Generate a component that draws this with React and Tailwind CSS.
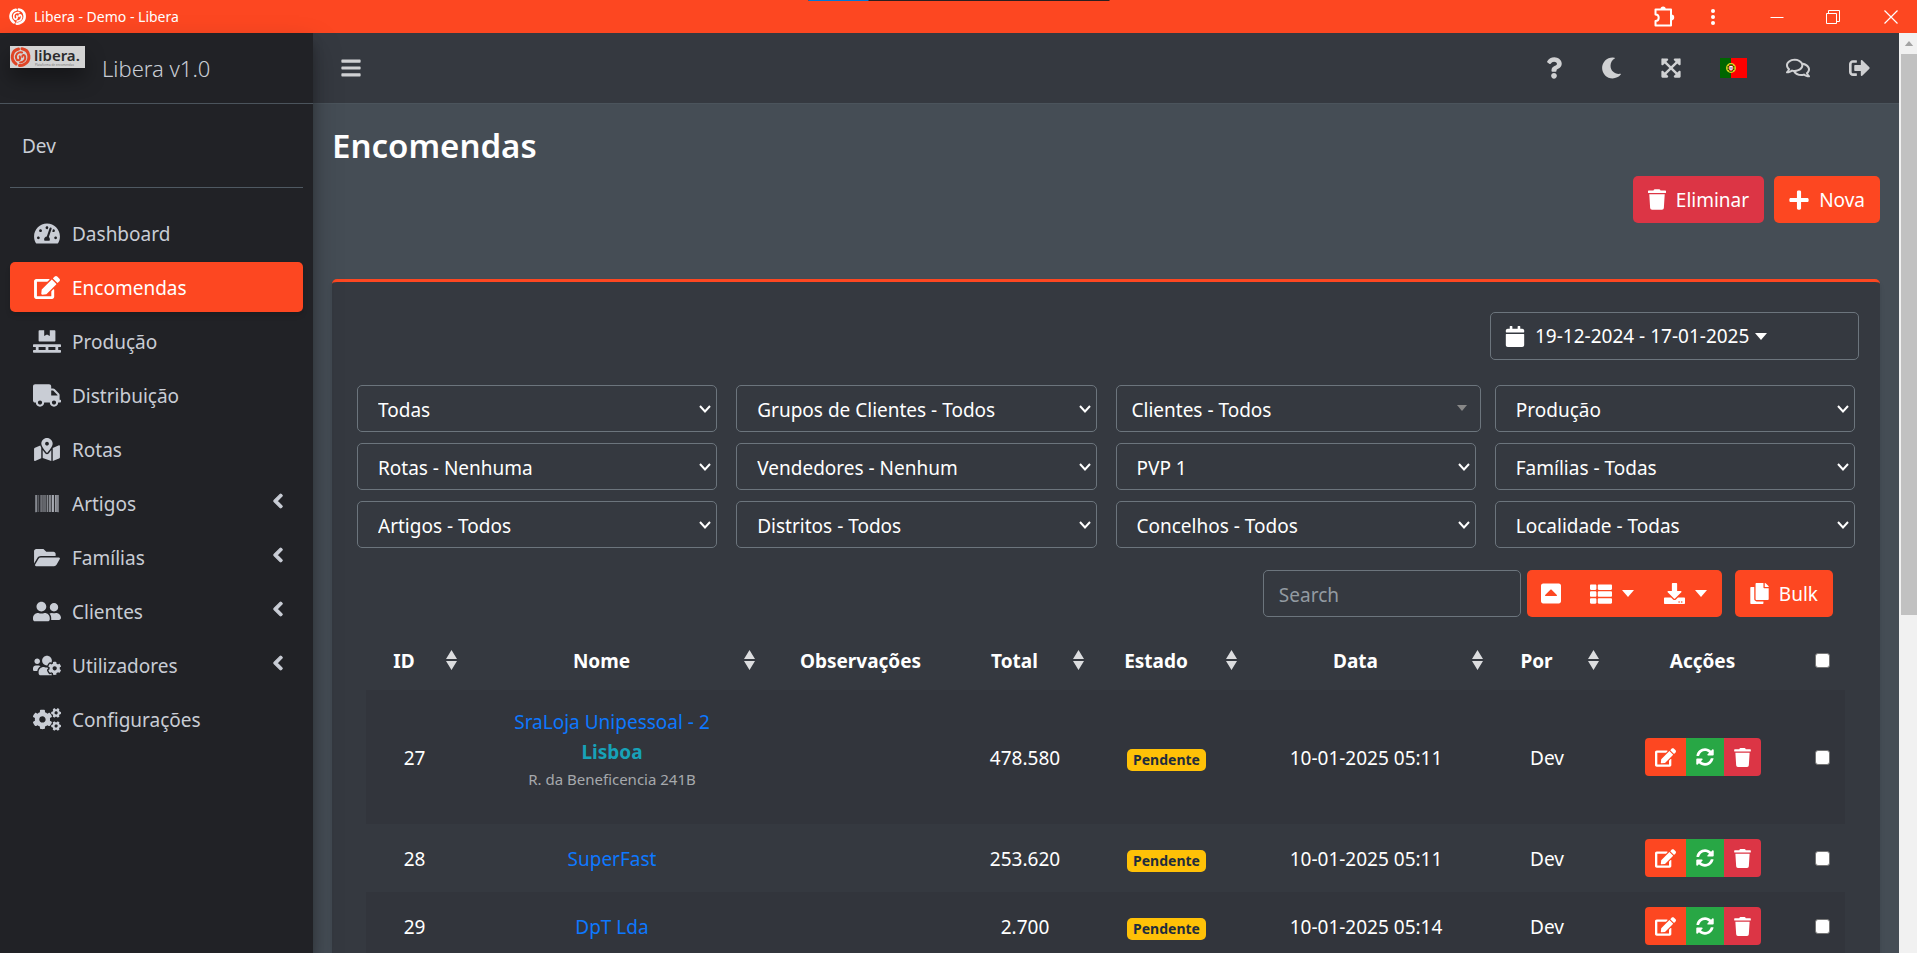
import React from 'react';
import {
  FaBars,
  FaBarcode,
  FaCalendar,
  FaCaretSquareUp,
  FaChevronLeft,
  FaCogs,
  FaCopy,
  FaDownload,
  FaEdit,
  FaExpandArrowsAlt,
  FaFolderOpen,
  FaMapMarkedAlt,
  FaMoon,
  FaPallet,
  FaPlus,
  FaQuestion,
  FaRegComments,
  FaSignOutAlt,
  FaSyncAlt,
  FaTachometerAlt,
  FaThList,
  FaTrash,
  FaTruck,
  FaUserFriends,
  FaUsersCog,
} from 'react-icons/fa';

const menu = [
  { label: 'Dashboard', icon: FaTachometerAlt },
  { label: 'Encomendas', icon: FaEdit, active: true },
  { label: 'Produção', icon: FaPallet },
  { label: 'Distribuição', icon: FaTruck },
  { label: 'Rotas', icon: FaMapMarkedAlt },
  { label: 'Artigos', icon: FaBarcode, tree: true },
  { label: 'Famílias', icon: FaFolderOpen, tree: true },
  { label: 'Clientes', icon: FaUserFriends, tree: true },
  { label: 'Utilizadores', icon: FaUsersCog, tree: true },
  { label: 'Configurações', icon: FaCogs },
];

const filters = [
  { name: 'tipo', value: 'Todas' },
  { name: 'grupos', value: 'Grupos de Clientes - Todos' },
  { name: 'clientes', value: 'Clientes - Todos', search: true },
  { name: 'producao', value: 'Produção' },
  { name: 'rotas', value: 'Rotas - Nenhuma' },
  { name: 'vendedores', value: 'Vendedores - Nenhum' },
  { name: 'pvp', value: 'PVP 1' },
  { name: 'familias', value: 'Famílias - Todas' },
  { name: 'artigos', value: 'Artigos - Todos' },
  { name: 'distritos', value: 'Distritos - Todos' },
  { name: 'concelhos', value: 'Concelhos - Todos' },
  { name: 'localidade', value: 'Localidade - Todas' },
];

const columns = [
  { label: 'ID', width: 'w-[97px]', sortable: true },
  { label: 'Nome', width: 'w-[298px]', sortable: true },
  { label: 'Observações', width: 'w-[199px]' },
  { label: 'Total', width: 'w-[130px]', sortable: true },
  { label: 'Estado', width: 'w-[153px]', sortable: true },
  { label: 'Data', width: 'w-[246px]', sortable: true },
  { label: 'Por', width: 'w-[116px]', sortable: true },
  { label: 'Acções', width: 'w-[195px]' },
];

const orders = [
  {
    id: 27,
    name: 'SraLoja Unipessoal - 2',
    city: 'Lisboa',
    address: 'R. da Beneficencia 241B',
    total: '478.580',
    date: '10-01-2025 05:11',
  },
  { id: 28, name: 'SuperFast', total: '253.620', date: '10-01-2025 05:11' },
  { id: 29, name: 'DpT Lda', total: '2.700', date: '10-01-2025 05:14' },
];

function Swirl() {
  return (
    <g fill="none" stroke="currentColor" strokeLinecap="round">
      <path strokeWidth="3" d="M8 2 C1 3.5 -0.5 12.5 5.6 17" />
      <path strokeWidth="3" d="M11.5 1.8 C19.6 3 21 14 13.4 17.6 C12 18.3 10.4 18.6 9 18.4" />
      <path strokeWidth="2" d="M11.6 5.4 C7 4.6 4.8 8 5.6 11.2 C6.4 14.2 9.6 13.8 9.6 11 C9.6 10.2 9.4 9.8 9.2 9.4" />
      <path strokeWidth="2" d="M9.6 15.4 C13.6 15.4 15.4 12.2 14.6 9.4 C13.8 7.2 11.6 7.8 11.8 9.8" />
    </g>
  );
}

function Logo() {
  return (
    <div className="bg-[#d3d3d3] text-[#df4527] shadow-[0_10px_20px_rgba(0,0,0,0.4)]">
      <svg viewBox="0 0 75 22" className="h-[22px] w-[75px] overflow-visible">
        <g transform="translate(0.5 1)">
          <Swirl />
        </g>
        <text x="24" y="15" fontSize="15" fontWeight="600" fill="#2b2b2d" className="font-['Noto_Sans',sans-serif]">
          libera.
        </text>
        <text x="25" y="20" fontSize="3" fill="#777" className="font-['Noto_Sans',sans-serif]">
          Plataforma de encomendas
        </text>
      </svg>
    </div>
  );
}

function Caret() {
  return (
    <svg viewBox="0 0 12 7" className="h-[7px] w-3 shrink-0" fill="currentColor">
      <path d="M0 0 H12 L6 7 Z" />
    </svg>
  );
}

function TitleBar() {
  return (
    <div className="relative flex h-[33px] shrink-0 items-center bg-[#fd4721] pl-[9px]">
      <svg viewBox="0 0 20 20" className="h-[17px] w-[17px]">
        <Swirl />
      </svg>
      <span className="ml-2 text-sm">Libera - Demo - Libera</span>
      <div className="absolute top-0 left-1/2 flex h-px w-[301px] -translate-x-1/2 bg-[#2b1f20]">
        <div className="w-[60px] bg-[#0078d7]" />
      </div>
      <div className="ml-auto flex items-center pr-[19px]">
        <button aria-label="Extensões" className="mr-[35px]">
          <svg
            viewBox="0 0 22 22"
            className="h-[22px] w-[22px]"
            fill="none"
            stroke="white"
            strokeWidth="2"
            strokeLinejoin="round"
          >
            <path d="M2.5 3.5 H18 V19.5 H2.5 V15 C6.8 15 6.8 8.5 2.5 8.5 Z" />
            <path fill="white" stroke="none" d="M7.5 3 a2.6 2.6 0 0 1 5.2 0 z M18.4 8.6 a2.8 2.8 0 0 1 0 5.6 z" />
          </svg>
        </button>
        <button aria-label="Menu" className="mr-[54px]">
          <svg viewBox="0 0 6 18" className="h-[18px] w-[6px]" fill="white">
            <circle cx="3" cy="3" r="2" />
            <circle cx="3" cy="9" r="2" />
            <circle cx="3" cy="15" r="2" />
          </svg>
        </button>
        <button aria-label="Minimizar" className="mr-[42px]">
          <svg viewBox="0 0 14 14" className="h-[14px] w-[14px]" stroke="white">
            <path d="M0.5 7.5 H13.5" />
          </svg>
        </button>
        <button aria-label="Restaurar" className="mr-[44px]">
          <svg viewBox="0 0 14 14" className="h-[14px] w-[14px]" fill="none" stroke="white">
            <path d="M0.5 3.5 H10.5 V13.5 H0.5 Z M2.5 3.5 V0.5 H13.5 V11.5 H10.5" />
          </svg>
        </button>
        <button aria-label="Fechar">
          <svg viewBox="0 0 14 14" className="h-[14px] w-[14px]" stroke="white" strokeWidth="1.2">
            <path d="M0.5 0.5 L13.5 13.5 M13.5 0.5 L0.5 13.5" />
          </svg>
        </button>
      </div>
    </div>
  );
}

function Sidebar() {
  return (
    <aside className="z-10 w-[313px] shrink-0 bg-[#212226] text-[#c9cdd5] shadow-[0_14px_28px_rgba(0,0,0,0.25),0_10px_10px_rgba(0,0,0,0.22)]">
      <a href="#" className="flex h-[71px] items-start border-b border-[#4b545c] pl-[10px]">
        <div className="mt-[13px]">
          <Logo />
        </div>
        <span className="mt-4 ml-[17px] text-[22px] leading-[38px] font-light">Libera v1.0</span>
      </a>
      <div className="mx-[10px] flex h-[84px] items-center border-b border-[#4f5962] pl-3">
        <a href="#">Dev</a>
      </div>
      <nav className="mx-[10px] mt-5 flex flex-col gap-1">
        {menu.map(({ label, icon: Icon, active, tree }) => (
          <a
            key={label}
            href="#"
            className={`flex h-[50px] items-center rounded-[5px] pr-[18px] pl-[23px] ${
              active ? 'bg-[#fd4721] text-white shadow-md' : ''
            }`}
          >
            <Icon className="mr-[11px] h-[23px] w-7 shrink-0" />
            <span className="pt-[2px]">{label}</span>
            {tree && <FaChevronLeft className="mb-1 ml-auto h-4 w-[14px]" stroke="currentColor" strokeWidth="40" />}
          </a>
        ))}
      </nav>
    </aside>
  );
}

function Flag() {
  return (
    <svg viewBox="0 0 27 20" className="h-5 w-[27px]">
      <path fill="#060" d="M0 0 H11 V20 H0 Z" />
      <path fill="#f00" d="M11 0 H27 V20 H11 Z" />
      <circle cx="11" cy="10" r="4.3" fill="#060" stroke="#e8d71c" strokeWidth="1.3" />
      <path stroke="#e8d71c" strokeWidth="0.8" d="M6.8 10 H15.2 M8 7 L14 13 M14 7 L8 13" />
      <path fill="#f00" d="M8.8 7.4 H13.2 V11 Q13 13 11 13.3 Q9 13 8.8 11 Z" />
      <path fill="#fff" d="M9.4 8 H12.6 V11 Q12.4 12.4 11 12.6 Q9.6 12.4 9.4 11 Z" />
      <path fill="#2440a0" d="M10.6 9 h0.8 v2.4 h-0.8 z" />
    </svg>
  );
}

function Header() {
  return (
    <header className="flex h-[71px] shrink-0 items-center border-b border-[#4b545c] bg-[#353940] pr-[29px] pl-[28px] text-[#d0d1d3]">
      <button aria-label="Alternar menu">
        <FaBars className="h-[22px] w-5" />
      </button>
      <div className="ml-auto flex items-center gap-[39px]">
        <button aria-label="Ajuda">
          <FaQuestion className="h-[22px] w-4" />
        </button>
        <button aria-label="Modo escuro">
          <FaMoon className="h-[22px] w-[21px]" />
        </button>
        <button aria-label="Ecrã inteiro">
          <FaExpandArrowsAlt className="h-[22px] w-5" />
        </button>
        <button aria-label="Idioma">
          <Flag />
        </button>
        <button aria-label="Mensagens">
          <FaRegComments className="h-[22px] w-6" />
        </button>
        <button aria-label="Sair">
          <FaSignOutAlt className="h-[22px] w-[21px]" />
        </button>
      </div>
    </header>
  );
}

function FilterSelect({ name, value, search }) {
  return (
    <div className={`relative ${search ? '-mr-[5px]' : ''}`}>
      <select
        aria-label={name}
        className={`h-[47px] w-full appearance-none rounded-[5px] border border-[#6c757d] bg-[#353940] pt-[2px] pr-8 ${
          search ? 'pl-[15px]' : 'pl-5'
        }`}
      >
        <option>{value}</option>
      </select>
      {search ? (
        <svg viewBox="0 0 10 6" className="pointer-events-none absolute top-5 right-[14px] h-[6px] w-[10px]" fill="#888">
          <path d="M0 0 H10 L5 6 Z" />
        </svg>
      ) : (
        <svg
          viewBox="0 0 12 8"
          className="pointer-events-none absolute top-5 right-[6px] h-2 w-3"
          fill="none"
          stroke="white"
          strokeWidth="2"
        >
          <path d="M1 1 L6 6.5 L11 1" />
        </svg>
      )}
    </div>
  );
}

function SortIcon() {
  return (
    <svg viewBox="0 0 11 20" className="absolute top-1/2 right-[6px] h-5 w-[11px] -translate-y-1/2" fill="#dcdddf">
      <path d="M5.5 0 L11 9 H0 Z M0 11 H11 L5.5 20 Z" />
    </svg>
  );
}

const checkbox = 'mx-auto block h-[15px] w-[15px] appearance-none rounded-[3px] border border-[#767676] bg-white';

function OrdersTable() {
  return (
    <table className="w-full table-fixed border-collapse text-center">
      <thead>
        <tr className="h-[60px]">
          {columns.map(({ label, width, sortable }) => (
            <th key={label} className={`relative pt-[2px] font-bold ${width} ${sortable ? 'pr-[21px]' : ''}`}>
              {label}
              {sortable && <SortIcon />}
            </th>
          ))}
          <th className="w-[45px]">
            <input type="checkbox" aria-label="Seleccionar tudo" className={checkbox} />
          </th>
        </tr>
      </thead>
      <tbody>
        {orders.map((order) => (
          <tr key={order.id} className="h-[68px] odd:bg-[#32353c]">
            <td className="pt-[2px]">{order.id}</td>
            <td className="pt-[2px]">
              <a href="#" className="text-[#0d78ff]">
                {order.name}
              </a>
              {order.city && (
                <div className="pb-[19px]">
                  <div className="leading-[30px] font-bold text-[#17a2b8]">{order.city}</div>
                  <div className="text-[15px] leading-6 text-[#a6a9ad]">{order.address}</div>
                </div>
              )}
            </td>
            <td />
            <td className="pt-[2px]">{order.total}</td>
            <td className={order.city ? 'h-[134px] pt-[2px]' : 'pt-[2px]'}>
              <span className="inline-block rounded-[5px] bg-[#ffc107] px-[6px] text-sm leading-[22px] font-bold text-[#1f2d3d]">
                Pendente
              </span>
            </td>
            <td className="pt-[2px]">{order.date}</td>
            <td className="pt-[2px]">Dev</td>
            <td>
              <div className="inline-flex h-[38px] overflow-hidden rounded align-middle">
                <button aria-label="Editar" className="bg-[#fd4721] px-[10px]">
                  <FaEdit className="h-[19px] w-[21px]" />
                </button>
                <button aria-label="Actualizar" className="bg-[#28a745] px-[10px]">
                  <FaSyncAlt className="h-[18px] w-[18px]" />
                </button>
                <button aria-label="Eliminar" className="bg-[#dc3545] px-[10px]">
                  <FaTrash className="h-[19px] w-[17px]" />
                </button>
              </div>
            </td>
            <td>
              <input type="checkbox" aria-label={`Seleccionar ${order.id}`} className={checkbox} />
            </td>
          </tr>
        ))}
      </tbody>
    </table>
  );
}

function Scrollbar() {
  return (
    <div className="flex w-[18px] shrink-0 flex-col bg-[#f1f1f1] pl-[2px]">
      <div className="flex h-[21px] items-center justify-center">
        <svg viewBox="0 0 10 6" className="h-[5px] w-[10px]" fill="#a3a3a3">
          <path d="M0 6 H10 L5 0 Z" />
        </svg>
      </div>
      <div className="h-[61%] bg-[#c1c1c1]" />
    </div>
  );
}

export default function App() {
  return (
    <div className="flex h-screen flex-col overflow-hidden bg-[#454d55] font-['Noto_Sans',sans-serif] text-[19px] leading-[30px] text-white">
      <TitleBar />
      <div className="flex min-h-0 flex-1">
        <Sidebar />
        <div className="flex min-w-0 flex-1 flex-col">
          <Header />
          <main className="min-h-0 flex-1 overflow-hidden px-[19px]">
            <h1 className="pt-5 text-[33px] leading-[44px] font-semibold">Encomendas</h1>
            <div className="mt-2 flex justify-end gap-[10px]">
              <button className="flex h-[47px] items-center gap-[10px] rounded-[5px] bg-[#dc3545] px-[15px]">
                <FaTrash className="h-[21px] w-[18px]" />
                Eliminar
              </button>
              <button className="flex h-[47px] items-center gap-[10px] rounded-[5px] bg-[#fd4721] px-[15px]">
                <FaPlus className="h-[22px] w-5" />
                Nova
              </button>
            </div>

            <section className="mt-14 min-h-screen rounded-[5px] border-t-[3px] border-[#fd4721] bg-[#353940] shadow-md">
              <div className="flex justify-end pt-[30px] pr-[21px]">
                <button className="flex h-12 w-[369px] items-center rounded-[5px] border border-[#6c757d] px-[14px]">
                  <FaCalendar className="mr-[10px] h-[21px] w-5" />
                  19-12-2024 - 17-01-2025
                  <span className="ml-[6px]">
                    <Caret />
                  </span>
                </button>
              </div>

              <div className="mt-[25px] grid grid-cols-4 gap-x-[19px] gap-y-[11px] px-[25px]">
                {filters.map((filter) => (
                  <FilterSelect key={filter.name} {...filter} />
                ))}
              </div>

              <div className="mt-[22px] pr-[35px] pl-[34px]">
                <div className="flex justify-end pr-3">
                  <input
                    type="text"
                    placeholder="Search"
                    aria-label="Search"
                    className="mr-[6px] h-[47px] w-[258px] rounded-[5px] border border-[#6c757d] bg-transparent px-[15px] pt-[2px] placeholder:text-[#939ba2]"
                  />
                  <div className="mr-[13px] flex h-[47px] rounded-[5px] bg-[#fd4721]">
                    <button aria-label="Ocultar paginação" className="px-[14px]">
                      <FaCaretSquareUp className="h-[23px] w-5" />
                    </button>
                    <button aria-label="Colunas" className="flex items-center gap-[10px] px-[15px]">
                      <FaThList className="h-[22px] w-[22px]" />
                      <Caret />
                    </button>
                    <button aria-label="Exportar" className="flex items-center gap-[10px] px-[15px]">
                      <FaDownload className="h-[21px] w-[21px]" />
                      <Caret />
                    </button>
                  </div>
                  <button className="flex h-[47px] items-center gap-[10px] rounded-[5px] bg-[#fd4721] px-[15px]">
                    <FaCopy className="h-[21px] w-[19px]" />
                    Bulk
                  </button>
                </div>
                <div className="mt-[13px]">
                  <OrdersTable />
                </div>
              </div>
            </section>
          </main>
        </div>
        <Scrollbar />
      </div>
    </div>
  );
}
